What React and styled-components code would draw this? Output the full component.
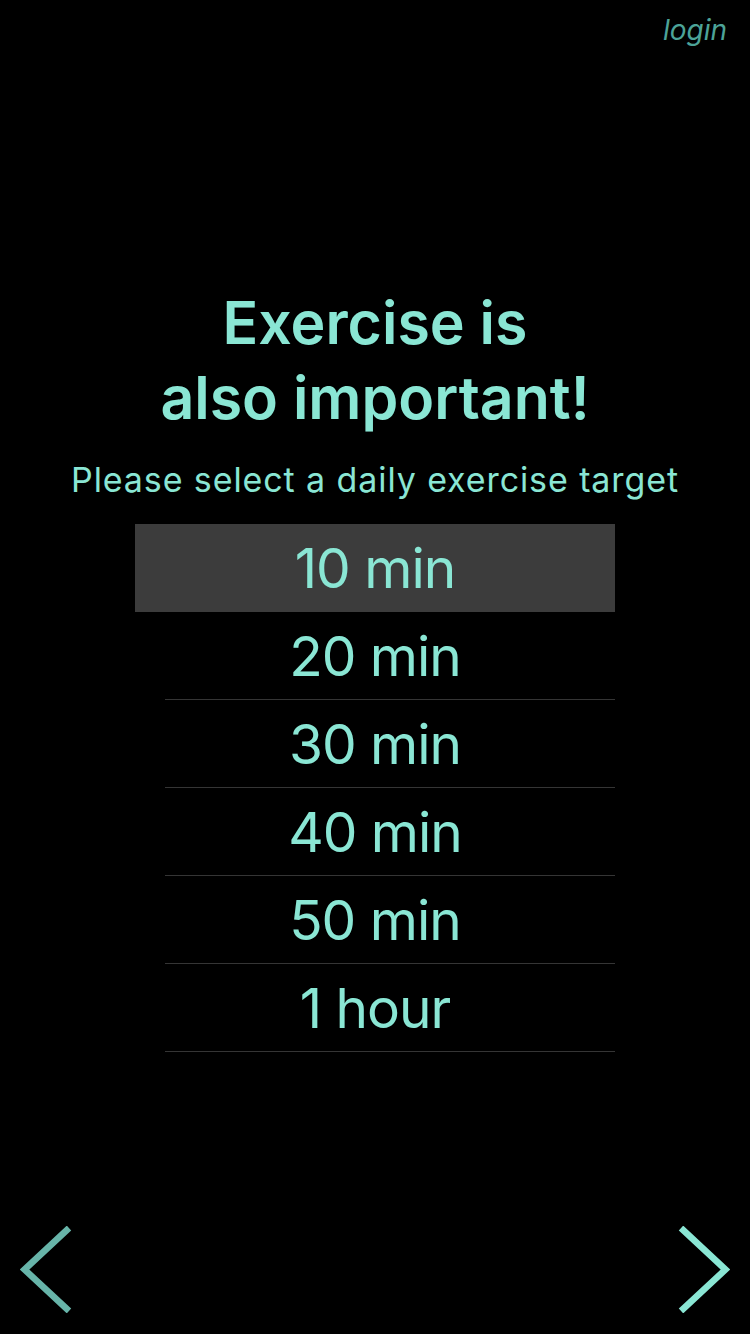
import React from 'react';
import styled, { createGlobalStyle } from 'styled-components';

const colors = {
  teal: '#8ae6d4',
  tealDim: '#67b4a9',
  tealDark: '#4ca398',
  selected: '#3c3c3c',
  line: '#353535',
};

const options = ['10 min', '20 min', '30 min', '40 min', '50 min', '1 hour'];

const GlobalStyle = createGlobalStyle`
  html, body {
    margin: 0;
    padding: 0;
    background: #000;
  }
  body {
    font-family: Inter, "Noto Sans", "Liberation Sans", sans-serif;
  }
`;

const Page = styled.div`
  width: 750px;
  height: 1334px;
  background: #000;
  display: flex;
  flex-direction: column;
  overflow: hidden;
`;

const TopBar = styled.div`
  display: flex;
  justify-content: flex-end;
  padding: 10px 23px 0 0;
  height: 50px;
  box-sizing: border-box;
`;

const Login = styled.a`
  font-size: 28px;
  font-style: italic;
  color: ${colors.tealDark};
  line-height: 40px;
  cursor: pointer;
`;

const Main = styled.main`
  flex: 1;
  display: flex;
  flex-direction: column;
  align-items: center;
  padding-top: 235px;
`;

const Title = styled.h1`
  margin: 0;
  font-size: 59px;
  line-height: 75px;
  font-weight: 600;
  color: ${colors.teal};
  text-align: center;
`;

const Subtitle = styled.p`
  margin: 25px 0 24px;
  font-size: 34px;
  line-height: 40px;
  letter-spacing: 0.9px;
  color: ${colors.teal};
  text-align: center;
`;

const List = styled.ul`
  list-style: none;
  margin: 0;
  padding: 0;
  width: 480px;
`;

const Row = styled.li`
  display: flex;
  flex-direction: column;
  background: ${p => (p.$selected ? colors.selected : 'transparent')};
  cursor: pointer;
`;

const Label = styled.span`
  height: 87px;
  display: flex;
  align-items: center;
  justify-content: center;
  font-size: 55px;
  letter-spacing: -1px;
  color: ${colors.teal};
`;

const Separator = styled.div`
  height: 1px;
  margin-left: 30px;
  background: ${p => (p.$hidden ? 'transparent' : colors.line)};
`;

const NavBar = styled.nav`
  display: flex;
  justify-content: space-between;
  align-items: center;
  padding: 0 20px 21px;
`;

const NavButton = styled.button`
  background: none;
  border: none;
  padding: 0;
  width: 52px;
  height: 87px;
  cursor: pointer;
  color: ${p => (p.$dim ? colors.tealDim : colors.teal)};
  svg { display: block; }
`;

const Chevron = ({ dir }) => (
  <svg width="52" height="87" viewBox="0 0 52 87">
    <polyline
      points={dir === 'left' ? '49,2 4.5,43.5 49,85' : '3,2 47.5,43.5 3,85'}
      fill="none"
      stroke="currentColor"
      strokeWidth="6.5"
    />
  </svg>
);

const App = () => {
  const [selected, setSelected] = React.useState(0);

  return (
    <Page>
      <GlobalStyle />
      <TopBar>
        <Login>login</Login>
      </TopBar>
      <Main>
        <Title>Exercise is<br />also important!</Title>
        <Subtitle>Please select a daily exercise target</Subtitle>
        <List>
          {options.map((o, i) => (
            <Row key={o} $selected={i === selected} onClick={() => setSelected(i)}>
              <Label>{o}</Label>
              <Separator $hidden={i === selected} />
            </Row>
          ))}
        </List>
      </Main>
      <NavBar>
        <NavButton $dim aria-label="back"><Chevron dir="left" /></NavButton>
        <NavButton aria-label="next"><Chevron dir="right" /></NavButton>
      </NavBar>
    </Page>
  );
};

export default App;
